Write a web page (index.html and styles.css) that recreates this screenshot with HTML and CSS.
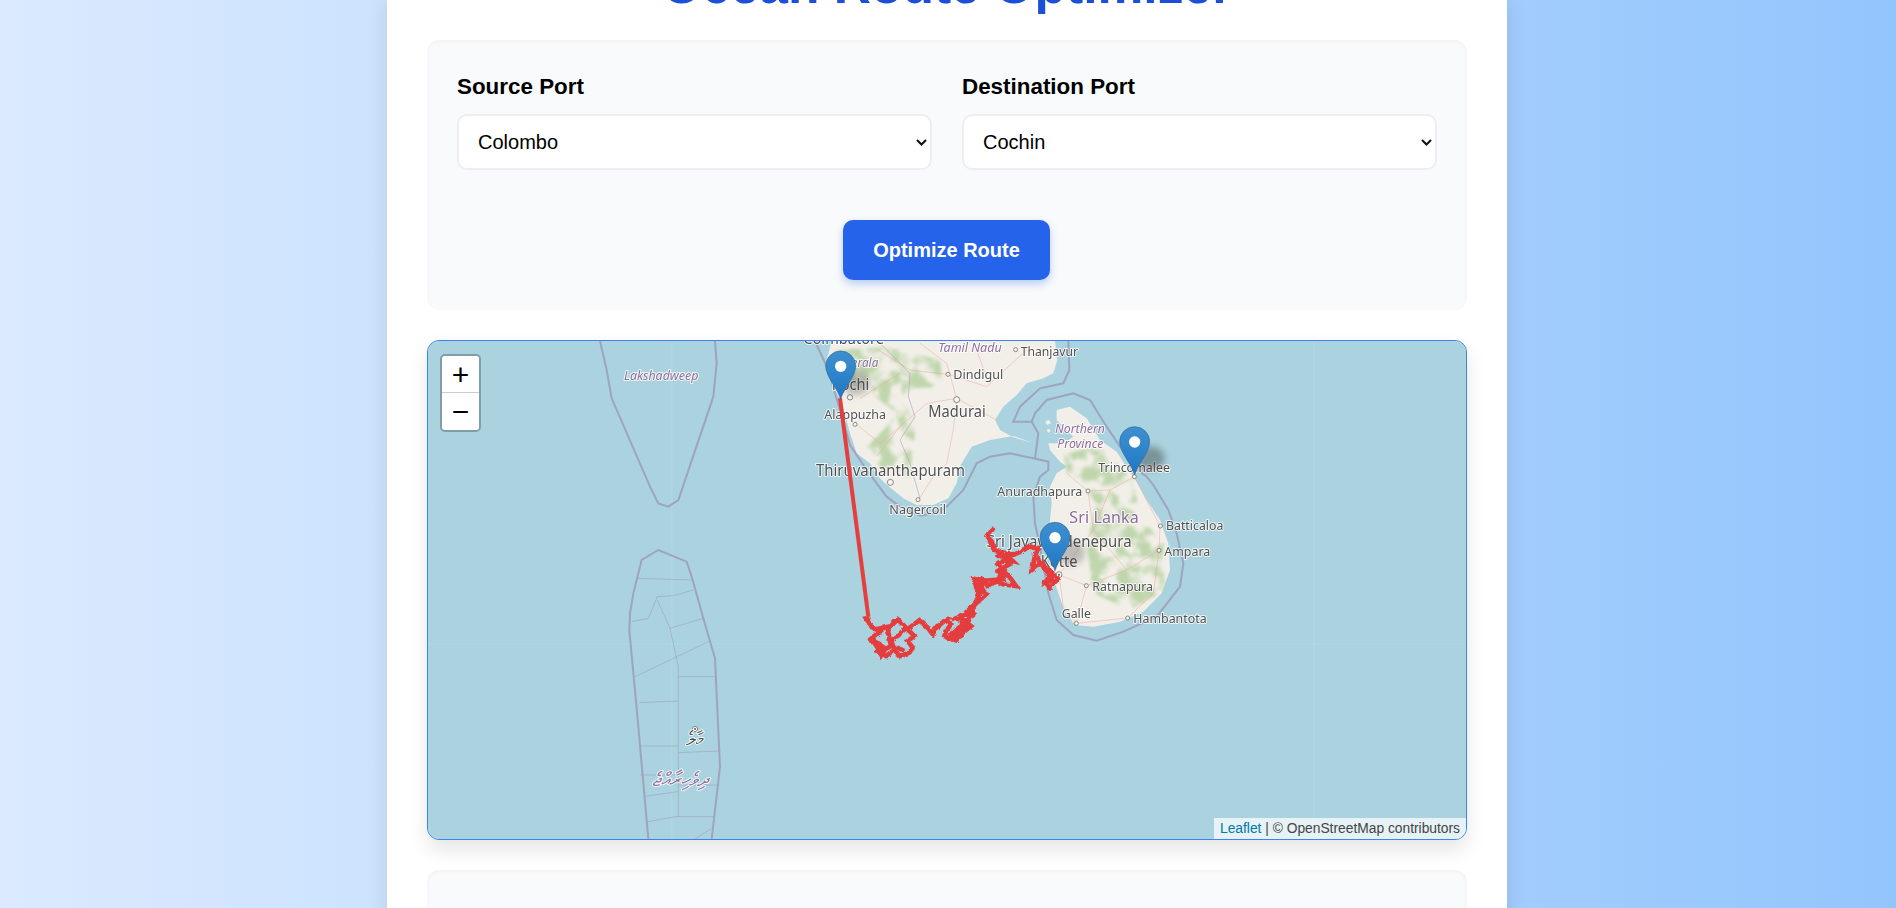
FILE: index.html
```html
<!DOCTYPE html>
<html lang="en">
<head>
<meta charset="utf-8">
<title>Ocean Route Optimizer</title>
<link rel="stylesheet" href="styles.css">
</head>
<body>
<div class="page">
  <main class="container">
    <h1 class="title">Ocean Route Optimizer</h1>
    <section class="panel form-panel">
      <div class="fields">
        <div class="field">
          <label class="field-label" for="src">Source Port</label>
          <select class="field-select" id="src"><option>Colombo</option><option>Cochin</option><option>Trincomalee</option></select>
        </div>
        <div class="field">
          <label class="field-label" for="dst">Destination Port</label>
          <select class="field-select" id="dst"><option>Cochin</option><option>Colombo</option><option>Trincomalee</option></select>
        </div>
      </div>
      <div class="actions"><button class="optimize" type="button">Optimize Route</button></div>
    </section>
    <section class="map">
      <svg class="map-canvas" viewBox="-1116 33 3114 1494" xmlns="http://www.w3.org/2000/svg" preserveAspectRatio="none">
        <defs>
          <linearGradient id="pin" x1="0" y1="0" x2="0" y2="1">
            <stop offset="0" stop-color="#3f8fcf"/>
            <stop offset="0.55" stop-color="#2c83cb"/>
            <stop offset="1" stop-color="#2377bf"/>
          </linearGradient>
          <filter id="patchy" x="-10%" y="-10%" width="120%" height="120%">
            <feTurbulence type="fractalNoise" baseFrequency="0.022" numOctaves="3" seed="7" result="noise"/>
            <feColorMatrix in="noise" type="matrix" values="0 0 0 0 0  0 0 0 0 0  0 0 0 0 0  3.4 3.4 0 0 -2.9" result="mask"/>
            <feComposite in="SourceGraphic" in2="mask" operator="in" result="cut"/>
            <feGaussianBlur in="cut" stdDeviation="4"/>
          </filter>
          <filter id="rough" x="-5%" y="-5%" width="110%" height="110%">
            <feTurbulence type="turbulence" baseFrequency="0.05" numOctaves="1" seed="3" result="n"/>
            <feDisplacementMap in="SourceGraphic" in2="n" scale="9" xChannelSelector="R" yChannelSelector="G"/>
          </filter>
          <g id="marker">
            <path class="pin-body" d="M0,0 C-8,-32 -45,-68 -45,-100 A45,45 0 1 1 45,-100 C45,-68 8,-32 0,0Z"/>
            <circle class="pin-dot" cx="0" cy="-99" r="17"/>
          </g>
        </defs>
        <rect class="sea" x="-1116" y="33" width="3114" height="1494"/>
        <g class="tiles">
          <path class="seam" d="M-384 33V1527M1542 33V1527M-1116 942H1998"/>
          <!-- land -->
          <path class="land" d="M95,33 L88,60 L78,95 L92,140 L100,170 L125,215 L138,265 L150,310 L170,370 L210,400 L235,440 L255,460 L310,505 L350,525 L400,525 L445,505 L470,460 L482,405 L515,350 L570,330 L640,318 L700,340 L640,322 L600,300 L585,270 L610,230 L650,195 L680,160 L730,145 L760,130 L772,90 L765,33Z"/>
          <path class="land" d="M770,240 L810,230 L860,265 L900,330 L950,365 L985,420 L1010,455 L1040,510 L1080,570 L1105,640 L1110,720 L1085,790 L1030,845 L960,875 L880,890 L825,885 L795,845 L775,790 L755,730 L745,660 L748,590 L755,520 L750,470 L770,430 L800,410 L780,395 L750,360 L745,340 L790,340 L820,320 L790,290 L770,270Z"/>
          <path class="land" d="M735,275 l12,-6 l6,10 l-12,6Z M740,300 l8,-4 l4,8 l-8,4Z"/>
          <!-- forest -->
          <path class="forest" d="M110,60 L260,50 L420,90 L430,170 L340,175 L300,205 L350,270 L330,440 L250,430 L200,350 L250,300 L290,250 L200,180 L120,150Z"/>
          <path class="forest" d="M790,370 L900,350 L1000,450 L1020,560 L1090,640 L1095,780 L990,840 L880,790 L860,640 L890,520 L800,430Z"/>
          <!-- roads and borders -->
          <path class="road" d="M360,40 L440,100 L470,205 L460,300 L440,400 M470,205 L380,220 L300,290 L230,380 M444,133 L560,170 L680,60 M444,133 L330,120 L235,60 M470,205 L590,270 M520,35 L560,140 M355,510 L400,440 L440,400 M170,283 L240,340 L300,290 M180,205 L300,130"/>
          <path class="road" d="M1003,440 L930,480 L864,483 L800,430 M864,483 L880,600 L777,734 M1003,440 L1080,588 L1077,661 L980,720 L860,767 L777,734 M860,767 L829,880 L983,864 L1060,790 L1077,661 M777,734 L790,830 L829,880 M930,480 L880,600 L980,720"/>
          <path class="state" d="M240,40 L330,130 L325,200 L345,260 L300,330 L330,400 L360,505"/>
          <!-- maritime boundaries -->
          <path class="border" d="M45,33 L85,120 L120,240 L150,345 L200,420 L260,500 L300,530 L360,557 L400,550 L440,530 L490,480 L530,400 L570,380 L630,370 L700,385 L745,395 L745,420 L720,440 L700,500 L705,580 L720,650 L745,790 L770,870 L820,915 L890,932 L970,905 L1070,860 L1140,770 L1150,700 L1130,610 L1105,540 L1060,465 L1040,440 L1000,410 L920,290 L870,210 L820,190 L740,210 L705,250 L695,275 L640,275 L660,230 L720,175 L790,160 L808,120 L805,33"/>
          <path class="border" d="M695,275 L715,310 L705,385"/>
          <path class="border" d="M-600,33 L-580,120 L-565,205 L-450,470 L-425,520 L-395,530 L-365,510 L-260,200 L-250,100 L-255,33"/>
          <path class="border" d="M-510,850 L-500,790 L-475,690 L-425,660 L-340,695 L-325,740 L-280,900 L-255,985 L-240,1310 L-265,1527 M-510,850 L-512,900 L-485,1190 L-455,1527"/>
          <path class="border thin" d="M-485,745 L-325,750 M-505,875 L-455,865 L-428,800 L-380,797 L-320,780 M-428,810 L-390,895 L-340,880 L-290,865 M-390,895 L-365,1010 L-365,1460 M-495,1040 L-275,935 M-365,1040 L-255,1040 M-482,1118 L-365,1113 M-482,1248 L-365,1248 M-365,1268 L-242,1263 M-480,1335 L-365,1335 M-365,1365 L-242,1365 M-470,1400 L-368,1385 M-455,1475 L-375,1460 L-260,1460 M-315,1527 L-265,1495"/>
          <!-- places -->
          <g class="dots">
            <circle cx="647" cy="59" r="6"/><circle cx="444" cy="133" r="6"/><circle cx="470" cy="209" r="9"/>
            <circle cx="150" cy="202" r="8"/><circle cx="165" cy="283" r="6"/><circle cx="271" cy="457" r="9"/>
            <circle cx="354" cy="509" r="6"/><circle cx="1003" cy="440" r="6"/><circle cx="864" cy="483" r="6"/>
            <circle cx="1081" cy="588" r="6"/><circle cx="1077" cy="661" r="6"/><circle cx="859" cy="767" r="6"/>
            <circle cx="829" cy="880" r="6"/><circle cx="983" cy="864" r="6"/><circle cx="777" cy="734" r="9"/>
            <circle cx="-315" cy="1197" r="8"/>
          </g>
          <circle class="capital" cx="777" cy="734" r="3"/>
          <circle class="capital" cx="-315" cy="1197" r="3"/>
          <!-- labels -->
          <g class="labels">
            <text class="place big" x="10" y="42" textLength="242" lengthAdjust="spacingAndGlyphs">Coimbatore</text>
            <text class="region" x="415" y="65" textLength="190" lengthAdjust="spacingAndGlyphs">Tamil Nadu</text>
            <text class="place" x="662" y="78" textLength="172" lengthAdjust="spacingAndGlyphs">Thanjavur</text>
            <text class="place" x="460" y="146" textLength="150" lengthAdjust="spacingAndGlyphs">Dindigul</text>
            <text class="place big" x="385" y="262" textLength="172" lengthAdjust="spacingAndGlyphs">Madurai</text>
            <text class="region" x="135" y="112" textLength="100" lengthAdjust="spacingAndGlyphs">Kerala</text>
            <text class="place big" x="95" y="180" textLength="113" lengthAdjust="spacingAndGlyphs">Kochi</text>
            <text class="place" x="73" y="268" textLength="185" lengthAdjust="spacingAndGlyphs">Alappuzha</text>
            <text class="place big" x="48" y="438" textLength="447" lengthAdjust="spacingAndGlyphs">Thiruvananthapuram</text>
            <text class="place" x="268" y="553" textLength="170" lengthAdjust="spacingAndGlyphs">Nagercoil</text>
            <text class="region" x="765" y="310" textLength="150" lengthAdjust="spacingAndGlyphs">Northern</text>
            <text class="region" x="772" y="355" textLength="138" lengthAdjust="spacingAndGlyphs">Province</text>
            <text class="place" x="895" y="427" textLength="215" lengthAdjust="spacingAndGlyphs">Trincomalee</text>
            <text class="place" x="592" y="498" textLength="255" lengthAdjust="spacingAndGlyphs">Anuradhapura</text>
            <text class="country" x="808" y="580" textLength="208" lengthAdjust="spacing">Sri Lanka</text>
            <text class="place big" x="560" y="652" textLength="435" lengthAdjust="spacingAndGlyphs">Sri Jayawardenepura</text>
            <text class="place big" x="722" y="710" textLength="111" lengthAdjust="spacingAndGlyphs">Kotte</text>
            <text class="place" x="1098" y="600" textLength="172" lengthAdjust="spacingAndGlyphs">Batticaloa</text>
            <text class="place" x="1093" y="677" textLength="138" lengthAdjust="spacingAndGlyphs">Ampara</text>
            <text class="place" x="877" y="783" textLength="182" lengthAdjust="spacingAndGlyphs">Ratnapura</text>
            <text class="place" x="785" y="865" textLength="88" lengthAdjust="spacingAndGlyphs">Galle</text>
            <text class="place" x="1000" y="878" textLength="220" lengthAdjust="spacingAndGlyphs">Hambantota</text>
            <text class="region" x="-528" y="150" textLength="223" lengthAdjust="spacingAndGlyphs">Lakshadweep</text>
            <text class="place dhivehi" x="-342" y="1245" textLength="54" lengthAdjust="spacingAndGlyphs">މާލެ</text>
            <text class="region dhivehi" x="-445" y="1368" textLength="168" lengthAdjust="spacingAndGlyphs">ދިވެހިރާއްޖެ</text>
          </g>
        </g>
        <!-- marker shadows -->
        <g class="shadows">
          <ellipse class="shadow" cx="168" cy="158" rx="42" ry="38"/>
          <ellipse class="shadow" cx="812" cy="668" rx="42" ry="38"/>
          <ellipse class="shadow dark" cx="1050" cy="385" rx="44" ry="36"/>
        </g>
        <!-- route -->
        <path class="route" d="M120,205 L205,860"/>
        <g class="tangle">
          <polyline class="route" points="205,860 195,862 212,888 225,895 248,890 235,905 225,910 208,925 220,935 230,950 240,973 252,955 270,945 260,895 290,865 315,890 290,915 270,930 285,965 298,975 325,965 335,950 320,930 340,915 320,895 355,868 380,890 395,910 400,895 430,870 440,865 450,880 435,900 430,915 465,928 485,905 510,885 490,870 465,862 495,850 525,852 500,840 555,790 530,780 520,750 540,742 560,765 590,750 605,760 645,765 620,730 595,740 610,720 590,700 615,685 635,690 610,665 580,660 560,615 578,590 560,615 585,655 610,670 640,670 665,660 685,645 710,655 700,680 695,715 720,695 760,730 730,755 745,770 770,745 765,735"/>
          <polyline class="route" points="450,905 480,890 460,915 440,925 500,870 540,775 545,750 605,745 590,720 625,700 600,670 585,680"/>
          <polyline class="route" points="700,665 715,690 745,735 735,755 760,745"/>
          <polyline class="route" points="520,765 545,775 535,755 525,745 550,750 530,770"/>
          <polyline class="route" points="215,925 245,945 230,960 255,975 290,950 310,960"/>
          <polyline class="route" points="445,905 455,925 480,915 505,865 475,880"/>
        </g>
        <use href="#marker" x="122" y="208"/>
        <use href="#marker" x="765" y="722"/>
        <use href="#marker" x="1004" y="435"/>
      </svg>
      <div class="zoom-control">
        <button class="zoom-btn zoom-in" type="button">+</button>
        <button class="zoom-btn" type="button">−</button>
      </div>
      <div class="attribution"><a class="attribution-link" href="#">Leaflet</a> | © OpenStreetMap contributors</div>
    </section>
    <section class="panel results-panel"></section>
  </main>
</div>
</body>
</html>
```
FILE: styles.css
```css
html, body {
  margin: 0;
  height: 908px;
  overflow: hidden;
}
body {
  font-family: "Liberation Sans", Arial, sans-serif;
  background: #dbeafe;
}
.page {
  height: 908px;
  overflow: hidden;
  display: flex;
  justify-content: center;
  padding-right: 2px;
  background: linear-gradient(90deg, #dbeafe 0%, #93c5fd 100%);
}
.container {
  width: 1120px;
  flex: none;
  box-sizing: border-box;
  padding: 0 40px 40px;
  background: #fff;
  box-shadow: 0 0 20px rgba(0, 0, 0, 0.1);
  height: 1200px;
}
.title {
  margin: -44px 0 25px;
  font-size: 51.6px;
  font-weight: 700;
  text-align: center;
  color: #1d4ed8;
  line-height: 59px;
}
.panel {
  background: #f9fafb;
  border-radius: 12px;
  box-shadow: inset 0 2px 4px rgba(0, 0, 0, 0.035);
  margin-bottom: 30px;
}
.form-panel {
  padding: 30px;
  height: 270px;
  box-sizing: border-box;
}
.fields {
  display: grid;
  grid-template-columns: 1fr 1fr;
  gap: 30px;
}
.field-label {
  display: block;
  font-size: 22.4px;
  font-weight: 700;
  color: #000;
  line-height: 26px;
  padding-top: 4px;
  margin-bottom: 14px;
}
.field-select {
  display: block;
  width: 100%;
  height: 56px;
  box-sizing: border-box;
  padding: 0 30px 0 19px;
  font-family: inherit;
  font-size: 20px;
  color: #000;
  appearance: none;
  background-color: #fff;
  background-image: url("data:image/svg+xml,%3Csvg xmlns='http://www.w3.org/2000/svg' width='11' height='7' viewBox='0 0 11 7'%3E%3Cpath d='M1 1l4.5 4.5L10 1' fill='none' stroke='%23111' stroke-width='2'/%3E%3C/svg%3E");
  background-repeat: no-repeat;
  background-position: right 3px center;
  border: 2px solid #eceef1;
  border-radius: 10px;
}
.actions {
  display: flex;
  justify-content: center;
  padding-right: 1px;
  margin-top: 50px;
}
.optimize {
  width: 207px;
  height: 60px;
  padding: 0;
  border: 0;
  border-radius: 10px;
  background: #2563eb;
  color: #fff;
  font-family: inherit;
  font-size: 20px;
  font-weight: 700;
  box-shadow: 0 4px 8px rgba(37, 99, 235, 0.3);
}
.map {
  position: relative;
  height: 500px;
  box-sizing: border-box;
  border: 1px solid #3b82f6;
  border-radius: 12px;
  overflow: hidden;
  background: #aad3df;
  box-shadow: 0 10px 20px rgba(0, 0, 0, 0.1);
  margin-bottom: 30px;
}
.map-canvas {
  display: block;
  width: 100%;
  height: 100%;
}
.sea { fill: #aad3df; }
.tiles { filter: blur(0.5px); }
.seam { fill: none; stroke: #b9dbe3; stroke-width: 2; }
.land { fill: #f2efe9; stroke: none; }
.forest { fill: #b3d09e; opacity: 0.8; filter: url(#patchy); }
.road { fill: none; stroke: #eba79c; stroke-width: 2; opacity: 0.75; }
.state { fill: none; stroke: #a99fb2; stroke-width: 2.5; opacity: 0.7; }
.border { fill: none; stroke: #9c9fbb; stroke-width: 6; opacity: 0.9; }
.border.thin { stroke-width: 2.5; opacity: 0.7; }
.dots circle { fill: #f8f6f2; stroke: #77736c; stroke-width: 2.5; }
.capital { fill: #555; }
.labels text {
  font-family: "Noto Sans", sans-serif;
  paint-order: stroke;
  stroke: rgba(255, 255, 255, 0.8);
  stroke-width: 6px;
  stroke-linejoin: round;
}
.place { font-size: 40px; fill: #505050; }
.place.big { font-size: 47px; }
.region { font-size: 38px; font-style: italic; fill: #8f6f9c; }
.country { font-size: 48px; fill: #8a6a9a; }
.dhivehi { font-size: 58px; }
.shadow { fill: #3a3a3a; opacity: 0.28; filter: blur(9px); }
.shadow.dark { opacity: 0.42; filter: blur(11px); }
.route {
  fill: none;
  stroke: #e53e3e;
  stroke-width: 12;
  stroke-linejoin: miter;
}
.tangle { filter: url(#rough); }
.tangle .route { stroke-width: 14; }
.pin-body { fill: url(#pin); stroke: #2c6e9c; stroke-width: 2; }
.pin-dot { fill: #fff; }
.zoom-control {
  position: absolute;
  left: 12px;
  top: 13px;
  width: 41px;
  box-sizing: border-box;
  border: 2px solid rgba(0, 0, 0, 0.25);
  border-radius: 5px;
  background-clip: padding-box;
  overflow: hidden;
}
.zoom-btn {
  display: block;
  width: 100%;
  height: 37px;
  padding: 0;
  border: 0;
  background: #fff;
  color: #000;
  font-family: "Liberation Sans", sans-serif;
  font-size: 30px;
  line-height: 37px;
}
.zoom-in {
  border-bottom: 1px solid #ccc;
}
.attribution {
  position: absolute;
  right: 0;
  bottom: 0;
  height: 21px;
  padding: 0 6px;
  font-size: 13.8px;
  line-height: 21px;
  color: #444;
  background: rgba(255, 255, 255, 0.7);
}
.attribution-link {
  color: #0078a8;
  text-decoration: none;
}
.results-panel { height: 300px; }
```
